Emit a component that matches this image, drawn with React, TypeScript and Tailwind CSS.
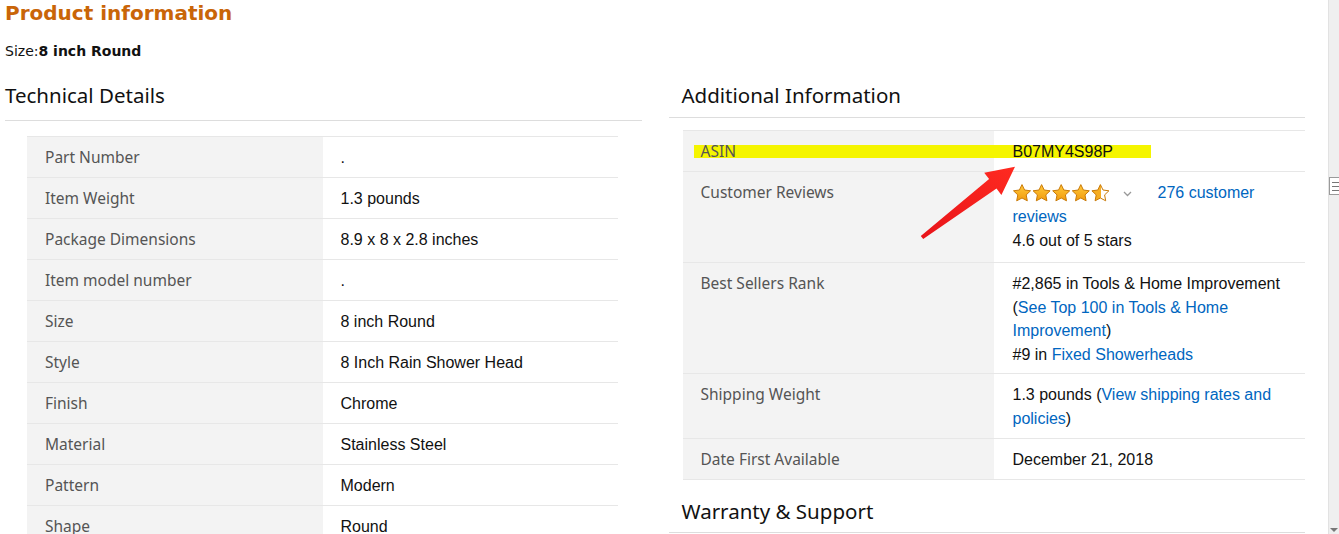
import React from 'react';

const techRows: [string, string][] = [
  ['Part Number', '.'],
  ['Item Weight', '1.3 pounds'],
  ['Package Dimensions', '8.9 x 8 x 2.8 inches'],
  ['Item model number', '.'],
  ['Size', '8 inch Round'],
  ['Style', '8 Inch Rain Shower Head'],
  ['Finish', 'Chrome'],
  ['Material', 'Stainless Steel'],
  ['Pattern', 'Modern'],
  ['Shape', 'Round'],
  ['Included Components', 'Shower Head'],
];

const labelCls = "w-1/2 bg-[#f3f3f3] px-[18px] py-2 text-left align-top font-['Noto_Sans',sans-serif] text-[15.5px] font-normal leading-6 text-[#555]";
const valueBase = "w-1/2 pt-[9px] pb-[7px] align-top font-['Liberation_Sans',Arial,sans-serif] text-[16px] text-[#111]";
const leftValueCls = valueBase + ' px-[18px] leading-6';
const rightValueCls = valueBase + ' pl-[19px] pr-[14px] leading-6';
const linkCls = 'text-[#0066c0]';

const Star = ({ x, half }: { x: number; half?: boolean }) => (
  <path
    transform={`translate(${x} 0)`}
    d="M9 0.6l2.6 5.4 5.9.8-4.3 4.1 1.1 5.9L9 14l-5.3 2.8 1.1-5.9L.5 6.8l5.9-.8z"
    fill={half ? 'url(#starHalf)' : 'url(#starFill)'}
    stroke="#c97a08"
    strokeWidth="1"
    strokeLinejoin="round"
  />
);

const Stars = () => (
  <svg width="122" height="18" viewBox="0 0 122 18" className="mr-[23px] inline-block align-[-4px]">
    <defs>
      <linearGradient id="starFill" x1="0" y1="0" x2="0" y2="1">
        <stop offset="0" stopColor="#ffc83a" />
        <stop offset="1" stopColor="#f29b0e" />
      </linearGradient>
      <linearGradient id="starHalf" x1="0" y1="0" x2="1" y2="0">
        <stop offset="0.52" stopColor="#f6ad22" />
        <stop offset="0.52" stopColor="#ffffff" />
      </linearGradient>
    </defs>
    <Star x={0} />
    <Star x={19.6} />
    <Star x={39.2} />
    <Star x={58.8} />
    <Star x={78.4} half />
    <path d="M111 8l3.5 3.5 3.5-3.5" fill="none" stroke="#999" strokeWidth="1.3" />
  </svg>
);

export default function App() {
  return (
    <div className="relative flex h-[534px] w-full overflow-hidden bg-white">
      <div className="w-[1328px] shrink-0 pl-[5px]">
        <h1 className="font-['DejaVu_Sans',Verdana,sans-serif] text-[20px] font-bold leading-[27px] text-[#c96508]">
          Product information
        </h1>
        <div className="mt-[14px] font-['DejaVu_Sans',Verdana,sans-serif] text-[14px] leading-5 text-[#111]">
          Size:<span className="font-bold">8 inch Round</span>
        </div>

        <div className="mt-[20px] grid w-[1300px] grid-cols-2 gap-[27px]">
          {/* left column */}
          <div>
            <h2 className="border-b border-[#dddddd] pb-[11px] font-['Noto_Sans',sans-serif] text-[20.5px] leading-7 text-[#111]">
              Technical Details
            </h2>
            <table className="mt-[15px] ml-[22px] w-[591px] table-fixed border-collapse">
              <tbody>
                {techRows.map(([k, v]) => (
                  <tr key={k} className="border-t border-[#e7e7e7]">
                    <th className={labelCls}>{k}</th>
                    <td className={leftValueCls}>{v}</td>
                  </tr>
                ))}
              </tbody>
            </table>
          </div>

          {/* right column */}
          <div>
            <h2 className="border-b border-[#dddddd] pb-[8px] pl-[13px] font-['Noto_Sans',sans-serif] text-[20.5px] leading-7 text-[#111]">
              Additional Information
            </h2>
            <table className="mt-[12px] ml-[14px] w-[622px] table-fixed border-collapse">
              <tbody>
                <tr className="border-t border-[#e7e7e7]">
                  <th className={labelCls}>
                    <span className="relative z-10">ASIN</span>
                  </th>
                  <td className={rightValueCls}>
                    <span className="relative z-10">B07MY4S98P</span>
                  </td>
                </tr>
                <tr className="border-t border-[#e7e7e7]">
                  <th className={labelCls + ' pb-[10px]'}>Customer Reviews</th>
                  <td className={rightValueCls + ' pb-[9px]'}>
                    <Stars />
                    <a className={linkCls}>276 customer reviews</a>
                    <br />
                    4.6 out of 5 stars
                  </td>
                </tr>
                <tr className="border-t border-[#e7e7e7]">
                  <th className={labelCls}>Best Sellers Rank</th>
                  <td className={valueBase + ' pl-[19px] pr-[14px] leading-[23.5px]'}>
                    #2,865 in Tools &amp; Home Improvement (<a className={linkCls}>See Top 100 in Tools &amp; Home Improvement</a>)
                    <br />
                    #9 in <a className={linkCls}>Fixed Showerheads</a>
                  </td>
                </tr>
                <tr className="border-t border-[#e7e7e7]">
                  <th className={labelCls}>Shipping Weight</th>
                  <td className={rightValueCls}>
                    1.3 pounds (<a className={linkCls}>View shipping rates and policies</a>)
                  </td>
                </tr>
                <tr className="border-y border-[#e7e7e7]">
                  <th className={labelCls}>Date First Available</th>
                  <td className={rightValueCls}>December 21, 2018</td>
                </tr>
              </tbody>
            </table>
            <h2 className="mt-[17px] border-b border-[#dddddd] pb-[7px] pl-[13px] font-['Noto_Sans',sans-serif] text-[20.5px] leading-7 text-[#111]">
              Warranty &amp; Support
            </h2>
          </div>
        </div>
      </div>

      {/* scrollbar strip */}
      <div className="flex flex-1 flex-col items-end border-l border-[#e2e2e2] bg-[#efefef]">
        <div className="mt-[177px] flex h-[18px] w-[10px] flex-col justify-center gap-[3px] border border-r-0 border-[#9a9a9a] bg-white pl-[2px]">
          <div className="h-px w-full bg-[#777]" />
          <div className="h-px w-full bg-[#777]" />
          <div className="h-px w-full bg-[#777]" />
        </div>
        <div className="mt-auto mb-[2px] mr-[1px] h-0 w-0 border-x-[4px] border-t-[4px] border-x-transparent border-t-[#777]" />
      </div>

      {/* annotations */}
      <div className="absolute left-[694px] top-[145px] h-[13px] w-[457px] bg-[#f5f500]" />
      <svg className="pointer-events-none absolute inset-0 z-20" width="1339" height="534">
        <defs>
          <linearGradient id="arrowRed" x1="0" y1="1" x2="1" y2="0">
            <stop offset="0" stopColor="#e8141a" />
            <stop offset="1" stopColor="#ff2a20" />
          </linearGradient>
        </defs>
        <polygon
          points="920.8,235.9 989.1,179 984.2,172.7 1015,166.7 1001.4,194.9 996.5,188.6 923.2,239.1"
          fill="url(#arrowRed)"
        />
      </svg>
    </div>
  );
}
